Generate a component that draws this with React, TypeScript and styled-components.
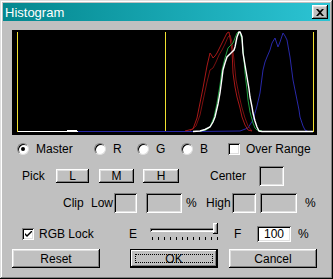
import React from "react";
import styled, { createGlobalStyle, css } from "styled-components";

const Global = createGlobalStyle`
  html, body { margin: 0; padding: 0; background: #c0c0c0; }
  body { font-family: "Liberation Sans", Arial, sans-serif; font-size: 12px; color: #000; }
  * { box-sizing: border-box; }
`;

const raised = css`
  box-shadow: inset -1px -1px #000, inset 1px 1px #fff, inset -2px -2px #808080, inset 2px 2px #dfdfdf;
`;
const sunken = css`
  box-shadow: inset 1px 1px #808080, inset -1px -1px #fff, inset 2px 2px #000, inset -2px -2px #dfdfdf;
`;

const Window = styled.div`
  width: 333px;
  height: 279px;
  background: #c0c0c0;
  padding: 3px;
  box-shadow: inset -1px -1px #000, inset 1px 1px #dfdfdf, inset -2px -2px #808080, inset 2px 2px #fff;
  display: flex;
  flex-direction: column;
`;

const TitleBar = styled.div`
  height: 18px;
  background: linear-gradient(to right, #03878e, #2cc4d4);
  display: flex;
  align-items: center;
  padding: 0 2px 0 2px;
  color: #fff;
  font-size: 13px;
`;

const Title = styled.span`
  flex: 1;
`;

const CloseBtn = styled.div`
  width: 16px;
  height: 14px;
  background: #c0c0c0;
  ${raised};
  display: flex;
  align-items: center;
  justify-content: center;
`;

const Content = styled.div`
  padding: 9px 13px 0 9px;
  display: flex;
  flex-direction: column;
`;

const Chart = styled.div`
  width: 305px;
  height: 105px;
  background: #000;
  svg { display: block; }
`;

const Row = styled.div<{ $mt: number; $h: number; $pl?: number }>`
  display: flex;
  align-items: center;
  margin-top: ${(p) => p.$mt}px;
  height: ${(p) => p.$h}px;
  padding-left: ${(p) => p.$pl ?? 0}px;
`;

const Cell = styled.div<{ $w?: number; $ml?: number }>`
  display: flex;
  align-items: center;
  flex: none;
  ${(p) => (p.$w ? `width: ${p.$w}px;` : "")}
  margin-left: ${(p) => p.$ml ?? 0}px;
  white-space: nowrap;
`;

const RadioCircle = styled.span<{ $on?: boolean }>`
  width: 12px;
  height: 12px;
  border-radius: 50%;
  background: #fff;
  flex: none;
  position: relative;
  border: 1px solid;
  border-color: #808080 #dfdfdf #dfdfdf #808080;
  box-shadow: inset 1px 1px #000;
  margin-right: 7px;
  ${(p) =>
    p.$on &&
    css`
      &::after {
        content: "";
        position: absolute;
        left: 3px;
        top: 3px;
        width: 4px;
        height: 4px;
        border-radius: 50%;
        background: #000;
      }
    `}
`;

const CheckBox = styled.span`
  width: 12px;
  height: 12px;
  background: #fff;
  flex: none;
  ${sunken};
  margin-right: 6px;
  display: flex;
  align-items: center;
  justify-content: center;
`;

const Button = styled.div<{ $w: number; $h: number; $ml?: number; $def?: boolean }>`
  width: ${(p) => p.$w}px;
  height: ${(p) => p.$h}px;
  margin-left: ${(p) => p.$ml ?? 0}px;
  flex: none;
  background: #c0c0c0;
  display: flex;
  align-items: center;
  justify-content: center;
  ${(p) =>
    p.$def
      ? css`
          border: 1px solid #000;
          box-shadow: inset -1px -1px #000, inset 1px 1px #fff, inset -2px -2px #808080;
        `
      : raised}
  position: relative;
`;

const Focus = styled.span`
  position: absolute;
  left: 4px;
  top: 4px;
  right: 4px;
  bottom: 4px;
  border: 1px dotted #000;
`;

const Field = styled.div<{ $w: number; $h: number; $white?: boolean }>`
  width: ${(p) => p.$w}px;
  height: ${(p) => p.$h}px;
  flex: none;
  background: ${(p) => (p.$white ? "#fff" : "#c0c0c0")};
  ${sunken};
  display: flex;
  align-items: center;
  justify-content: center;
`;

const Slider = styled.div`
  width: 70px;
  height: 18px;
  flex: none;
  position: relative;
  align-self: flex-start;
`;

const Track = styled.div`
  position: absolute;
  left: 0;
  right: 2px;
  top: 3px;
  height: 4px;
  ${sunken};
`;

const Thumb = styled.div`
  position: absolute;
  right: 2px;
  top: -2px;
  width: 5px;
  height: 11px;
  background: #c0c0c0;
  ${raised};
`;

const Ticks = styled.div`
  position: absolute;
  left: 2px;
  right: 2px;
  top: 12px;
  height: 3px;
  display: flex;
  justify-content: space-between;
  span { width: 1px; height: 3px; background: #000; }
`;

const pts = (a: number[][]) => a.map(([x, y]) => `${x - 12},${y - 30}`).join(" ");

const whiteCurve = [
  [193, 131.5], [200, 131], [205, 129.5], [210, 127], [213, 122], [215, 117], [218, 104], [220, 93], [222, 78], [223, 70],
  [225, 63], [227, 57], [230, 54], [232, 52], [234, 50], [235, 47], [236, 42], [237, 37], [239, 32], [240, 32],
  [241, 34], [242, 37], [243, 53], [245, 65], [247, 77], [249, 89], [250, 97], [252, 107], [253, 113], [255, 121], [257, 127],
  [259, 131], [262, 131.5], [313, 131.5],
];
const greenCurve = [
  [200, 131], [206, 130], [210, 127], [214, 117], [217, 103], [220, 85], [222, 70], [225, 58], [228, 48], [231, 45],
  [233, 43], [235, 38], [237, 33], [238, 32], [240, 33], [242, 40], [244, 60], [245, 73], [247, 90], [248, 100],
  [250, 112], [253, 123], [255, 128], [257, 130], [262, 131],
];
const redCurve = [
  [185, 131], [193, 129], [197, 118], [200, 103], [203, 88], [205, 77], [207, 66], [210, 53], [212, 56], [213, 58],
  [215, 56], [217, 53], [219, 49], [222, 43], [225, 37], [227, 33], [229, 32], [230, 38], [232, 50], [233, 73],
  [235, 87], [237, 97], [240, 108], [242, 117], [245, 125], [248, 130], [252, 131],
];
const redCurve2 = [
  [190, 131], [196, 126], [200, 115], [204, 96], [207, 82], [210, 70], [213, 68], [216, 62], [219, 55], [222, 50],
  [225, 44], [228, 37], [230, 35], [232, 42], [234, 60], [236, 80], [239, 95], [242, 108], [245, 118], [248, 126], [252, 131],
];
const blueCurve = [
  [77, 131.5], [200, 131.5], [240, 131], [248, 128], [253, 120], [257, 106], [260, 93], [263, 70], [265, 62], [267, 57],
  [270, 50], [272, 43], [275, 38], [277, 44], [278, 47], [280, 42], [283, 33], [285, 36], [287, 40], [290, 57],
  [293, 80], [295, 90], [297, 100], [299, 110], [300, 117], [303, 126], [305, 130], [308, 131.5],
];

const yellow = "#f0e030";

function Histogram() {
  return (
    <Chart>
      <svg width="305" height="105" viewBox="0 0 305 105">
        <rect x="5" y="2" width="1" height="100" fill={yellow} />
        <rect x="153" y="2" width="1" height="100" fill={yellow} />
        <rect x="301" y="2" width="1" height="100" fill={yellow} />
        <polyline points={pts(blueCurve)} fill="none" stroke="#2828a8" strokeWidth="1" />
        <polyline points={pts(redCurve2)} fill="none" stroke="#7a1010" strokeWidth="1" />
        <polyline points={pts(redCurve)} fill="none" stroke="#a81818" strokeWidth="1" />
        <polyline points={pts(greenCurve)} fill="none" stroke="#20a040" strokeWidth="1" />
        <rect x="6" y="101" width="60" height="1" fill="#fff" />
        <rect x="55" y="100" width="10" height="2" fill="#fff" />
        <polyline points={pts(whiteCurve)} fill="none" stroke="#fff" strokeWidth="1.4" />
      </svg>
    </Chart>
  );
}

export default function App() {
  return (
    <>
      <Global />
      <Window>
        <TitleBar>
          <Title>Histogram</Title>
          <CloseBtn>
            <svg width="8" height="7" viewBox="0 0 8 7">
              <path d="M0 0 L2 0 L4 2 L6 0 L8 0 L5 3.5 L8 7 L6 7 L4 5 L2 7 L0 7 L3 3.5 Z" fill="#000" />
            </svg>
          </CloseBtn>
        </TitleBar>
        <Content>
          <Histogram />
          <Row $mt={7} $h={14} $pl={5}>
            <Cell $w={77}><RadioCircle $on />Master</Cell>
            <Cell $w={43}><RadioCircle />R</Cell>
            <Cell $w={44}><RadioCircle />G</Cell>
            <Cell $w={47}><RadioCircle />B</Cell>
            <Cell><CheckBox />Over Range</Cell>
          </Row>
          <Row $mt={10} $h={20}>
            <Cell $w={34} $ml={10}>Pick</Cell>
            <Button $w={33} $h={14}>L</Button>
            <Button $w={35} $h={14} $ml={10}>M</Button>
            <Button $w={36} $h={14} $ml={9}>H</Button>
            <Cell $w={49} $ml={31}>Center</Cell>
            <Field $w={25} $h={20} />
          </Row>
          <Row $mt={7} $h={20}>
            <Cell $w={28} $ml={51}>Clip</Cell>
            <Cell $w={23}>Low</Cell>
            <Field $w={23} $h={20} />
            <Cell $ml={9}><Field $w={36} $h={20} /></Cell>
            <Cell $w={20} $ml={4}>%</Cell>
            <Cell $w={26}>High</Cell>
            <Field $w={24} $h={20} />
            <Cell $ml={4}><Field $w={37} $h={20} /></Cell>
            <Cell $ml={8}>%</Cell>
          </Row>
          <Row $mt={12} $h={18}>
            <Cell $ml={10}>
              <CheckBox>
                <svg width="7" height="7" viewBox="0 0 7 7">
                  <path d="M0 2 L0 4 L2 6 L7 1 L7 -1 L2 4 Z" fill="#000" />
                </svg>
              </CheckBox>
            </Cell>
            <Cell $w={90} $ml={-1}>RGB Lock</Cell>
            <Cell $w={21}>E</Cell>
            <Slider>
              <Track />
              <Thumb />
              <Ticks>
                {Array.from({ length: 12 }).map((_, i) => (
                  <span key={i} />
                ))}
              </Ticks>
            </Slider>
            <Cell $w={23} $ml={14}>F</Cell>
            <Field $w={34} $h={16} $white>100</Field>
            <Cell $ml={7}>%</Cell>
          </Row>
          <Row $mt={6} $h={19}>
            <Button $w={88} $h={19}>Reset</Button>
            <Button $w={88} $h={19} $ml={30} $def>
              <Focus />
              OK
            </Button>
            <Button $w={88} $h={19} $ml={11}>Cancel</Button>
          </Row>
        </Content>
      </Window>
    </>
  );
}
